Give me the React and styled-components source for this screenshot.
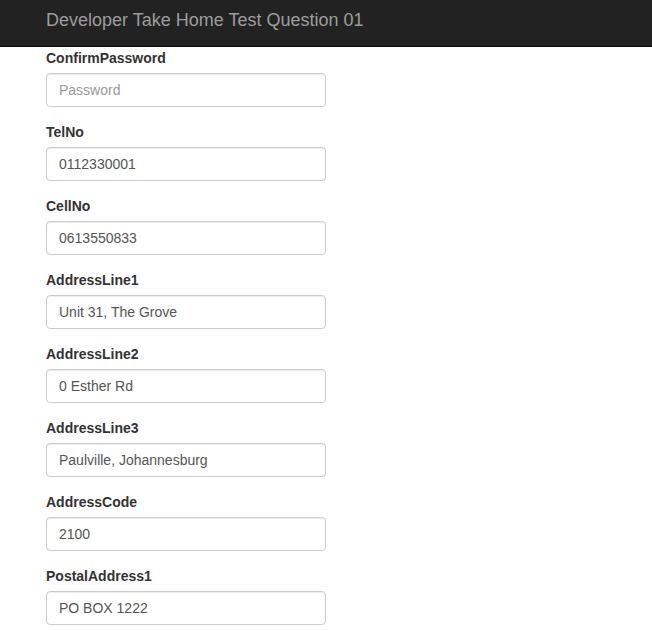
import React from 'react';
import styled, { createGlobalStyle } from 'styled-components';

const GlobalStyle = createGlobalStyle`
  html, body {
    margin: 0;
    padding: 0;
    background: #fff;
  }
  body {
    font-family: "Liberation Sans", Arial, Helvetica, sans-serif;
    font-size: 14px;
    line-height: 1.42857143;
    color: #333;
  }
  * {
    box-sizing: border-box;
  }
`;

const Navbar = styled.div`
  height: 47px;
  background: #222;
  border-bottom: 1px solid #080808;
  display: flex;
  align-items: flex-start;
`;
const Brand = styled.div`
  padding: 10px 0 0 46px;
  font-size: 18px;
  line-height: 20px;
  color: #9d9d9d;
`;
const Container = styled.div`
  padding: 1px 46px 0 46px;
`;
const FormGroup = styled.div`
  margin-bottom: 15px;
`;
const Label = styled.label`
  display: block;
  max-width: 100%;
  margin-bottom: 5px;
  font-weight: bold;
  line-height: 20px;
`;
const Input = styled.input`
  display: block;
  width: 280px;
  height: 34px;
  padding: 6px 12px;
  font-family: inherit;
  font-size: 14px;
  line-height: 1.42857143;
  color: #555;
  background: #fff;
  border: 1px solid #ccc;
  border-radius: 4px;
  box-shadow: inset 0 1px 1px rgba(0, 0, 0, 0.075);
  outline: none;
  &::placeholder {
    color: #999;
  }
`;

const fields = [
  { name: 'ConfirmPassword', value: '', placeholder: 'Password', type: 'password' },
  { name: 'TelNo', value: '0112330001' },
  { name: 'CellNo', value: '0613550833' },
  { name: 'AddressLine1', value: 'Unit 31, The Grove' },
  { name: 'AddressLine2', value: '0 Esther Rd' },
  { name: 'AddressLine3', value: 'Paulville, Johannesburg' },
  { name: 'AddressCode', value: '2100' },
  { name: 'PostalAddress1', value: 'PO BOX 1222' },
];

function App() {
  return (
    <>
      <GlobalStyle />
      <Navbar>
        <Brand>Developer Take Home Test Question 01</Brand>
      </Navbar>
      <Container>
        {fields.map((f) => (
          <FormGroup key={f.name}>
            <Label htmlFor={f.name}>{f.name}</Label>
            <Input
              id={f.name}
              type={f.type || 'text'}
              defaultValue={f.value}
              placeholder={f.placeholder}
            />
          </FormGroup>
        ))}
      </Container>
    </>
  );
}

export default App;
